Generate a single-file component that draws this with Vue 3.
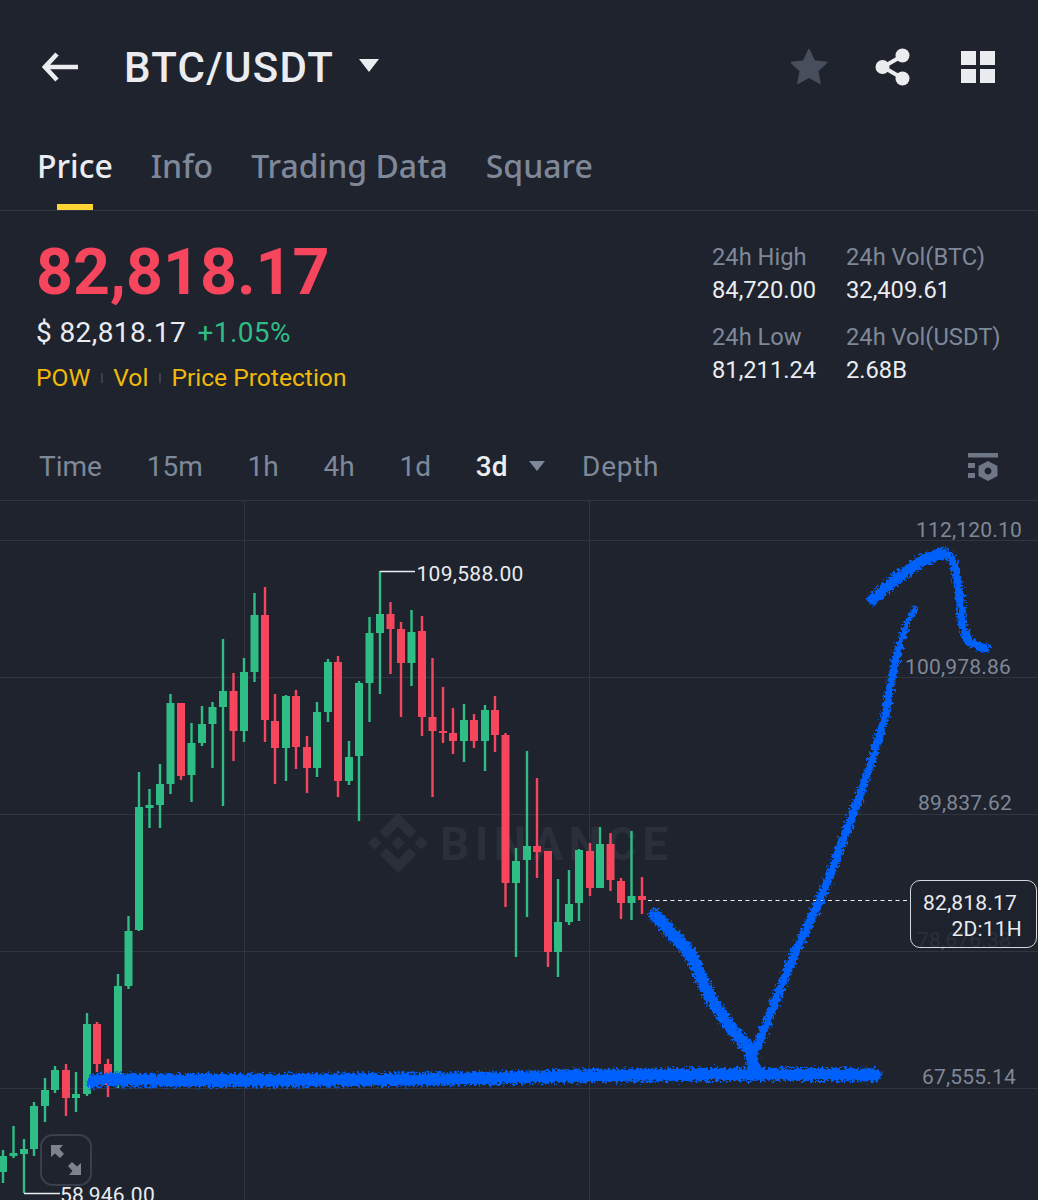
<script setup>
const G = '#2ebd85'
const R = '#f6465d'
// [x, wickTop, wickBottom, bodyTop, bodyBottom, colour]
const raw = [
  [3,1150,1183,1156,1172,G],[13.5,1126,1158,1153,1156,G],[24,1139,1193,1149,1154,G],[34,1102,1156,1106,1149,G],
  [45,1078,1122,1090,1106,G],[55,1066,1093,1070,1090,G],[66,1064,1116,1070,1098,R],[76,1072,1112,1094,1098,G],
  [87,1013,1096,1024,1094,G],[97,1022,1072,1024,1064,R],[108,1059,1097,1064,1085,R],[118,974,1088,986,1083,G],
  [128.5,916,989,931,986,G],[139,772,931,807,930,G],[149.5,789,828,805,808,G],[160,764,828,784,805,G],
  [170.5,694,794,703,784,G],[181,703,780,703,776,R],[191.5,723,802,743,775,G],[202,706,746,724,743,G],
  [212.5,702,768,707,724,G],[223,639,806,691,707,G],[233.5,673,761,691,731,R],[244,658,742,672,731,G],
  [254.5,593,682,615,672,G],[265,587,742,615,720,R],[275,694,784,721,748,R],[286,695,781,696,748,G],
  [296,690,769,696,747,R],[307,736,793,747,768,R],[317,702,777,712,768,G],[328,659,722,662,712,G],
  [338,656,797,662,781,R],[349,741,785,757,781,G],[359,681,821,683,756,G],[369.5,617,722,633,683,G],
  [380,571,694,614,633,G],[390.5,602,674,614,629,R],[401,622,717,629,663,R],[411.5,610,686,632,663,G],
  [422,616,736,631,717,R],[432.5,658,797,717,731,R],[443,687,743,731,733,R],[453,708,754,733,741,R],
  [464,704,762,720,741,G],[474,714,748,720,741,R],[485,705,771,710,741,G],[495,696,752,710,735,R],
  [505.5,733,907,735,883,R],[516,848,957,861,883,G],[527,751,917,846,860,G],[537,778,878,846,852,R],
  [548,851,967,851,952,R],[558,879,977,922,952,G],[569,870,925,904,922,G],[579,849,921,850,903,G],
  [590,843,896,851,888,R],[600,827,888,844,888,G],[610.5,833,891,844,880,R],[621,878,919,881,903,R],
  [631.5,831,920,896,903,G],[642,877,914,896,900,R],
]
const candles = raw.map(([x, wt, wb, bt, bb, c]) => ({ x, wt, wb, bt, bb, c }))
const gridY = [540, 677, 814, 951, 1088]
const gridX = [244, 589]
const axis = [
  { t: '112,120.10', x: 1022, y: 537 },
  { t: '100,978.86', x: 1011, y: 674 },
  { t: '89,837.62', x: 1012, y: 810 },
  { t: '67,555.14', x: 1016, y: 1084 },
]
const tabs = ['Price', 'Info', 'Trading Data', 'Square']
const times = ['15m', '1h', '4h', '1d']
</script>

<template>
  <div class="page">
    <header class="top">
      <svg class="back" viewBox="0 0 36 30" width="36" height="30">
        <path d="M15 2 3 15l12 13M3 15h33" fill="none" stroke="#eaecef" stroke-width="4.6" />
      </svg>
      <span class="pair">BTC/USDT</span>
      <i class="caret big"></i>
      <div class="tools">
        <svg width="38" height="38" viewBox="0 0 38 38">
          <path d="M19 1.5l5.3 11.4 12.4 1.5-9.1 8.6 2.4 12.3L19 29.2 8 35.3l2.4-12.3-9.1-8.6 12.4-1.5z" fill="#474e5c" stroke="#474e5c" stroke-width="1.5" stroke-linejoin="round" />
        </svg>
        <svg class="share" width="36" height="38" viewBox="0 0 36 38">
          <path d="M27 8 8 19l19 11" fill="none" stroke="#eaecef" stroke-width="4" />
          <circle cx="27.5" cy="7.5" r="7" fill="#eaecef" />
          <circle cx="7.5" cy="19" r="7" fill="#eaecef" />
          <circle cx="27.5" cy="30.5" r="7" fill="#eaecef" />
        </svg>
        <svg width="34" height="32" viewBox="0 0 34 32">
          <path d="M0 0h15v14H0zM19 0h15v14H19zM0 18h15v14H0zM19 18h15v14H19z" fill="#eaecef" />
        </svg>
      </div>
    </header>

    <nav class="tabs">
      <span v-for="(t, i) in tabs" :key="t" class="tab" :class="{ on: i === 0 }">{{ t }}</span>
    </nav>

    <section class="stats">
      <div class="left">
        <div class="last">82,818.17</div>
        <div class="usd">$ 82,818.17 <em>+1.05%</em></div>
        <div class="tags">
          <span>POW</span><i></i><span>Vol</span><i></i><span>Price Protection</span>
        </div>
      </div>
      <div class="right">
        <span class="k">24h High</span><span class="k">24h Vol(BTC)</span>
        <span class="v">84,720.00</span><span class="v">32,409.61</span>
        <span class="k gap">24h Low</span><span class="k gap">24h Vol(USDT)</span>
        <span class="v">81,211.24</span><span class="v">2.68B</span>
      </div>
    </section>

    <div class="times">
      <span>Time</span>
      <span v-for="t in times" :key="t">{{ t }}</span>
      <span class="cur">3d</span>
      <i class="caret small"></i>
      <span class="depth">Depth</span>
      <svg class="cfg" width="30" height="28" viewBox="0 0 30 28">
        <path d="M0 0h30v4.5H0zM0 10h7v5H0zM0 20h7v5H0z" fill="#6f7786" />
        <path fill-rule="evenodd" d="M20 8l9.5 5v10L20 28l-9.500-5V13zM20 14.500a3.500 3.500 0 1 0 .01 0z" fill="#6f7786" />
      </svg>
    </div>

    <div class="chart">
      <svg class="plot" width="1038" height="699" viewBox="0 501 1038 699">
        <defs>
          <filter id="rough" filterUnits="userSpaceOnUse" x="0" y="500" width="1038" height="700">
            <feTurbulence type="fractalNoise" baseFrequency="0.38" numOctaves="3" seed="4" />
            <feDisplacementMap in="SourceGraphic" scale="10" xChannelSelector="R" yChannelSelector="G" />
          </filter>
        </defs>

        <line v-for="y in gridY" :key="y" x1="0" x2="1038" :y1="y + 0.5" :y2="y + 0.5" class="grid" />
        <line v-for="x in gridX" :key="x" y1="500" y2="1200" :x1="x + 0.5" :x2="x + 0.5" class="grid" />

        <g fill="#2a2f3a">
          <path transform="translate(368 813) scale(2.5)" d="M16.624 13.9202l2.7175 2.7154-7.353 7.353-7.353-7.352 2.7175-2.7164 4.6355 4.6595 4.6356-4.6595zm4.6366-4.6366L24 12l-2.7154 2.7164L18.5682 12l2.6924-2.7164zm-9.272.001l2.7163 2.6914-2.7164 2.7174v-.001L9.2721 12l2.7164-2.7154zm-9.2722-.001L5.4088 12l-2.6914 2.6924L0 12l2.7164-2.7164zM11.9885.0115l7.353 7.329-2.7174 2.7154-4.6356-4.6356-4.6355 4.6595-2.7174-2.7154 7.353-7.353z" />
          <text x="440" y="860" class="mark">BINANCE</text>
        </g>

        <g v-for="(c, i) in candles" :key="i" :fill="c.c">
          <rect :x="c.x - 1.2" :y="c.wt" width="2.4" :height="c.wb - c.wt" />
          <rect :x="c.x - 4" :y="c.bt" width="8" :height="c.bb - c.bt" />
        </g>

        <text v-for="a in axis" :key="a.t" :x="a.x" :y="a.y" class="ax">{{ a.t }}</text>
        <text x="1011" y="947" class="ax dim">78,676.38</text>

        <path d="M380.500 572V571.500H415M24 1193.500H60" fill="none" stroke="#eaecef" stroke-width="1.300" />
        <text x="416.500" y="580.500" class="hl">109,588.00</text>
        <text x="60" y="1202" class="hl">58,946.00</text>

        <line x1="648" x2="910" y1="900.500" y2="900.500" stroke="#eaecef" stroke-width="1.200" stroke-dasharray="4 3.500" />

        <g fill="none" stroke="#0561fb" stroke-linecap="round" stroke-linejoin="round" filter="url(#rough)">
          <path stroke-width="13" d="M93 1082C98 1079 108 1078 125 1080C220 1081 340 1080 440 1079C520 1078 580 1075 650 1075C730 1074 810 1074 875 1075" />
          <path stroke-width="12.500" d="M655 915L690 953L710 997L730 1027L750 1050L755 1070" />
          <path stroke-width="9" d="M757 1047L793 957L820 900L830 875L858 800" />
          <path stroke-width="8" d="M858 800L873 757L885 717L892 677L898 650" />
          <path stroke-width="6" d="M898 650L907 623L916 608" />
          <path stroke-width="11.500" d="M873 599L897 578L923 560L943 553" />
          <path stroke-width="8.500" d="M943 553Q953 556 955 567L960 597L962 623Q964 636 970 642Q977 647 986 648" />
        </g>
      </svg>

      <div class="now">
        <span>82,818.17</span>
        <span class="cd">2D:11H</span>
      </div>

      <button class="full" type="button" aria-label="Fullscreen">
        <svg width="32" height="32" viewBox="0 0 32 32">
          <path d="M1 1h12L9.500 5 14 10 10 14 5 9.500 1 13zM31 31H19l3.500-4L18 22l4-4 5 4.500 4-3.500z" fill="#7d838e" />
        </svg>
      </button>
    </div>
  </div>
</template>

<style>
html, body { margin: 0; background: #1e232e; }
</style>

<style scoped>
.page {
  width: 1038px;
  height: 1200px;
  overflow: hidden;
  background: #1e232e;
  color: #eaecef;
  font-family: Roboto, "Liberation Sans", sans-serif;
}
.top {
  height: 134px;
  display: flex;
  align-items: center;
  padding-left: 42px;
}
.back { margin-right: 46px; }
.pair { font-size: 42px; font-weight: 500; letter-spacing: 1.3px; }
.caret { display: block; width: 0; height: 0; border-style: solid; border-color: transparent; }
.caret.big { margin-left: 25px; margin-bottom: 4px; border-width: 13px 10px 0; border-top-color: #eaecef; }
.tools {
  margin-left: auto;
  padding-right: 43px;
  display: flex;
  align-items: center;
  gap: 47px;
}
.share { margin-right: 3px; }
.tabs {
  height: 77px;
  box-sizing: border-box;
  padding-left: 37px;
  display: flex;
  gap: 38px;
  border-bottom: 1px solid #30353f;
  font-family: "Noto Sans", Roboto, sans-serif;
}
.tab {
  position: relative;
  color: #7f8898;
  font-size: 32px;
  font-weight: 500;
  line-height: 64px;
}
.tab.on { color: #eaecef; }
.tab.on::after {
  content: "";
  position: absolute;
  left: 20px;
  bottom: 0;
  width: 36px;
  height: 6px;
  background: #fcd535;
}
.stats {
  height: 222px;
  box-sizing: border-box;
  padding: 29px 37px 0 36px;
  display: flex;
  justify-content: space-between;
}
.last {
  color: #f6465d;
  font-size: 64.500px;
  font-weight: 700;
  line-height: 64px;
}
.usd { margin-top: 14px; font-size: 28px; line-height: 30px; letter-spacing: 0.4px; }
.usd em { margin-left: 4px; color: #2ebd85; font-style: normal; }
.tags {
  margin-top: 15px;
  display: flex;
  align-items: center;
  gap: 10.500px;
  color: #f0b90b;
  font-size: 24.600px;
  line-height: 30px;
}
.tags i { width: 2px; height: 10px; background: #3b404b; }
.right {
  margin-top: -1px;
  padding-top: 3px;
  display: grid;
  grid-template-columns: 134px 155px;
  row-gap: 3px;
  align-content: start;
  font-size: 23.700px;
  line-height: 30px;
  white-space: nowrap;
}
.k { color: #7f8898; }
.k.gap { margin-top: 14px; }
.times {
  height: 68px;
  box-sizing: border-box;
  padding: 0 40px 0 39px;
  display: flex;
  align-items: center;
  gap: 44.800px;
  color: #7f8898;
  font-size: 28px;
  border-bottom: 1px solid #30353f;
}
.cur { color: #eaecef; font-weight: 500; }
.caret.small { margin-left: -23px; margin-bottom: 2px; border-width: 10px 8px 0; border-top-color: #7f8898; }
.depth { margin-left: -8px; letter-spacing: 0.7px; }
.cfg { margin-left: auto; }
.chart { position: relative; height: 699px; overflow: hidden; }
.plot { display: block; }
.grid { stroke: #30353f; stroke-width: 1; }
.mark { font-size: 46px; font-weight: 700; letter-spacing: 5.500px; font-family: Roboto, sans-serif; }
.ax { fill: #808896; font-size: 21px; letter-spacing: 0.2px; text-anchor: end; }
.ax.dim { fill: #4b515d; }
.hl { fill: #eaecef; font-size: 21px; letter-spacing: 0.3px; }
.now {
  position: absolute;
  left: 910px;
  top: 379px;
  box-sizing: border-box;
  width: 127px;
  height: 68px;
  padding: 9px 14px 0 12px;
  display: flex;
  flex-direction: column;
  border: 1.500px solid #d5d7da;
  border-radius: 10px;
  background: rgba(30, 35, 46, 0.72);
  color: #eaecef;
  font-size: 21px;
  line-height: 26px;
  letter-spacing: 0.2px;
}
.cd { text-align: right; }
.full {
  position: absolute;
  left: 40px;
  top: 633px;
  width: 52px;
  height: 52px;
  padding: 0;
  display: flex;
  align-items: center;
  justify-content: center;
  border: 2px solid #3a404b;
  border-radius: 13px;
  background: transparent;
}
</style>
